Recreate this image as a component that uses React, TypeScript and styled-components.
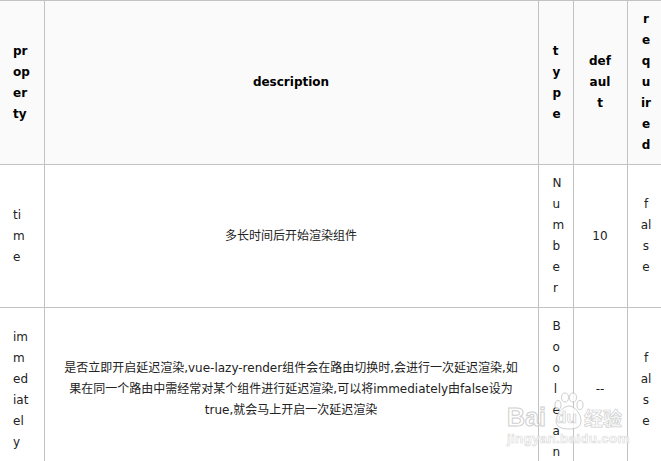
import React from "react";
import styled, { createGlobalStyle } from "styled-components";

const Global = createGlobalStyle`
  html, body { margin: 0; padding: 0; background: #fff; overflow: hidden; height: 461px; }
`;

const Page = styled.div`
  position: relative;
  width: 661px;
  height: 461px;
  overflow: hidden;
  font-family: "DejaVu Sans", "Noto Sans CJK SC", sans-serif;
  font-size: 12px;
  line-height: 21px;
  color: #222;
`;

const Table = styled.table`
  table-layout: fixed;
  width: 665px;
  border-collapse: collapse;
  text-align: center;
`;

const Head = styled.th<{ $left?: boolean; $pad: number }>`
  padding: 8px ${(p) => p.$pad}px;
  border: 1px solid #c2c2c2;
  border-left: ${(p) => (p.$left ? "none" : "1px solid #c2c2c2")};
  background: #fafafa;
  color: #000;
  font-weight: 700;
  overflow-wrap: break-word;
  text-align: ${(p) => (p.$left ? "left" : "center")};
`;

const Cell = styled.td<{ $left?: boolean; $pad: number }>`
  padding: 8px ${(p) => p.$pad}px;
  border: 1px solid #c2c2c2;
  border-left: ${(p) => (p.$left ? "none" : "1px solid #c2c2c2")};
  overflow-wrap: break-word;
  text-align: ${(p) => (p.$left ? "left" : "center")};
`;

const Watermark = styled.div`
  position: absolute;
  left: 507px;
  top: 404px;
  display: flex;
  flex-direction: column;
  gap: 1px;
  pointer-events: none;
  opacity: 0.8;
`;

const BrandRow = styled.div`
  display: flex;
  align-items: flex-end;
  height: 26px;
`;

const Brand = styled.span`
  font: 700 25px/26px "Liberation Sans", sans-serif;
  color: #fff;
  -webkit-text-stroke: 1px #c4c4c4;
`;

const DuWrap = styled.span`
  position: relative;
  margin-left: 7px;
  width: 27px;
  text-align: center;
`;

const BrandDu = styled.span`
  position: relative;
  font: 700 17px/20px "Liberation Sans", sans-serif;
  color: #fff;
  -webkit-text-stroke: 0.7px #c4c4c4;
`;

const BrandCn = styled.span`
  margin-left: 4px;
  font: 700 19px/24px "Noto Sans CJK SC", sans-serif;
  color: #fff;
  -webkit-text-stroke: 0.7px #c4c4c4;
`;

const BrandUrl = styled.span`
  font: 700 13.5px/16px "Liberation Sans", sans-serif;
  letter-spacing: 0.25px;
  white-space: nowrap;
  color: #fff;
  -webkit-text-stroke: 0.6px #cfcfcf;
`;

const Paw = styled.svg`
  position: absolute;
  left: 0;
  bottom: 0;
`;

const columns = [44, 494, 35, 54, 38];
const paddings = [13, 14, 14, 14, 13];

const rows = [
  ["time", "多长时间后开始渲染组件", "Number", "10", "false"],
  [
    "immediately",
    "是否立即开启延迟渲染,vue-lazy-render组件会在路由切换时,会进行一次延迟渲染,如果在同一个路由中需经常对某个组件进行延迟渲染,可以将immediately由false设为true,就会马上开启一次延迟渲染",
    "Boolean",
    "--",
    "false",
  ],
];

const headers = ["property", "description", "type", "default", "required"];

export default function App() {
  return (
    <Page>
      <Global />
      <Table>
        <colgroup>
          {columns.map((w, i) => (
            <col key={i} width={w} />
          ))}
        </colgroup>
        <thead>
          <tr>
            {headers.map((h, i) => (
              <Head key={h} $left={i === 0} $pad={paddings[i]}>
                {h}
              </Head>
            ))}
          </tr>
        </thead>
        <tbody>
          {rows.map((r) => (
            <tr key={r[0]}>
              {r.map((c, i) => (
                <Cell key={i} $left={i === 0} $pad={paddings[i]}>
                  {c}
                </Cell>
              ))}
            </tr>
          ))}
        </tbody>
      </Table>
      <Watermark>
        <BrandRow>
          <Brand>Bai</Brand>
          <DuWrap>
            <Paw width="31" height="38" viewBox="0 0 31 38">
              <g fill="#fff" stroke="#c4c4c4" strokeWidth="1">
                <ellipse cx="5" cy="13" rx="3" ry="4.5" />
                <ellipse cx="12" cy="5.5" rx="3.5" ry="4.5" />
                <ellipse cx="20" cy="5.5" rx="3.5" ry="4.5" />
                <ellipse cx="27" cy="13" rx="3" ry="4.5" />
                <path d="M16 14c5 0 12 7 12 15 0 6-5 8-12 8S3 35 3 29c0-8 8-15 13-15z" />
              </g>
            </Paw>
            <BrandDu>du</BrandDu>
          </DuWrap>
          <BrandCn>经验</BrandCn>
        </BrandRow>
        <BrandUrl>jingyan.baidu.com</BrandUrl>
      </Watermark>
    </Page>
  );
}
